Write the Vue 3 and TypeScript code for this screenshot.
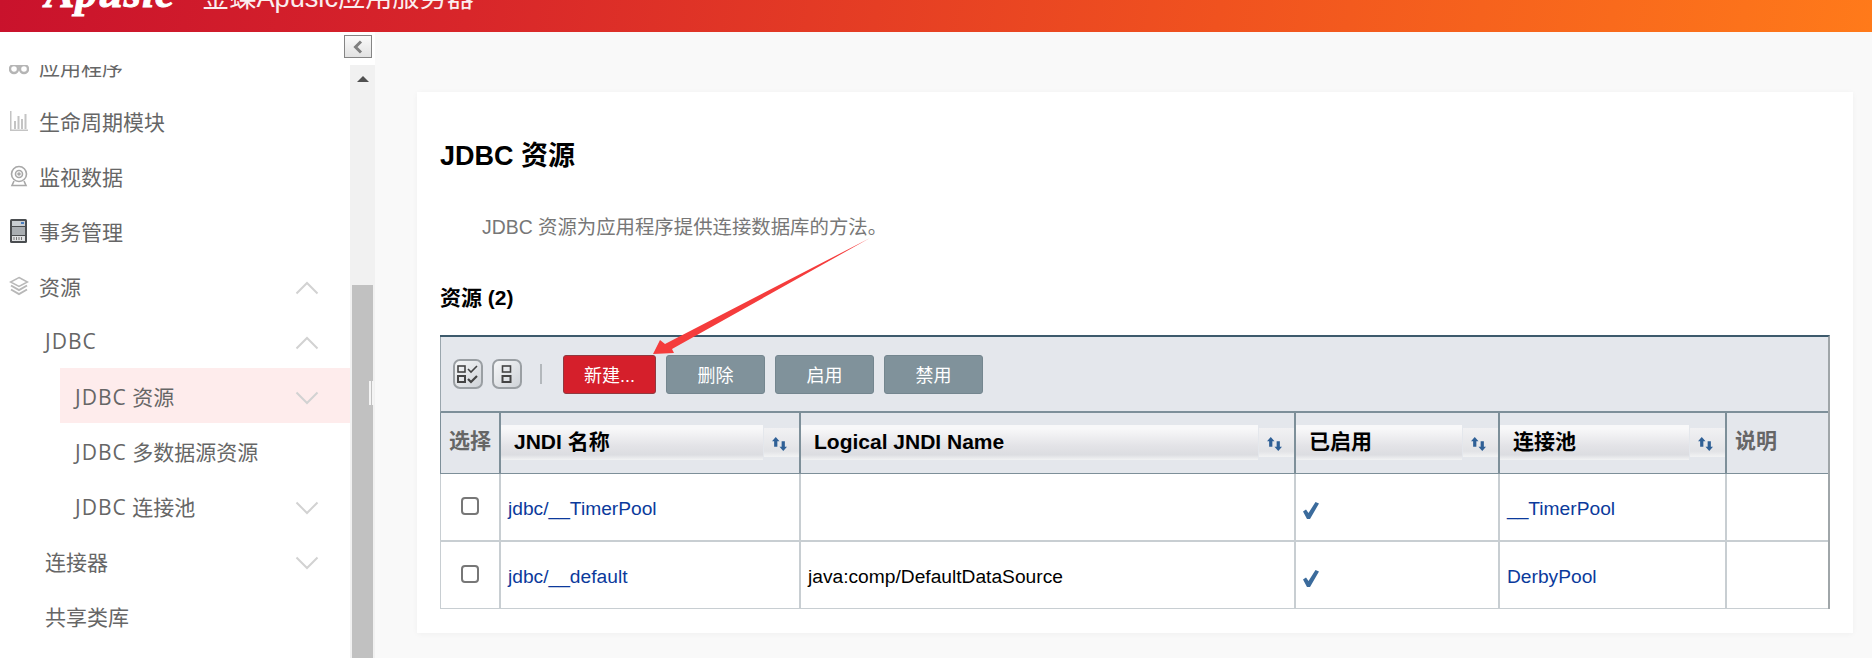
<script setup lang="ts">
// JDBC resources page of the Apusic admin console
interface MenuItem {
  label: string
  prefix?: string
  level: 1 | 2 | 3
  icon?: string
  chevron?: 'up' | 'down'
  active?: boolean
}

const menu: MenuItem[] = [
  { label: '应用程序', level: 1, icon: 'glasses' },
  { label: '生命周期模块', level: 1, icon: 'bars' },
  { label: '监视数据', level: 1, icon: 'cam' },
  { label: '事务管理', level: 1, icon: 'server' },
  { label: '资源', level: 1, icon: 'layers', chevron: 'up' },
  { prefix: 'JDBC', label: '', level: 2, chevron: 'up' },
  { prefix: 'JDBC', label: ' 资源', level: 3, chevron: 'down', active: true },
  { prefix: 'JDBC', label: ' 多数据源资源', level: 3 },
  { prefix: 'JDBC', label: ' 连接池', level: 3, chevron: 'down' },
  { label: '连接器', level: 2, chevron: 'down' },
  { label: '共享类库', level: 2 },
]

const actions = ['删除', '启用', '禁用']
const sortable = ['JNDI 名称', 'Logical JNDI Name', '已启用', '连接池']

const rows = [
  { name: 'jdbc/__TimerPool', logical: '', pool: '__TimerPool' },
  { name: 'jdbc/__default', logical: 'java:comp/DefaultDataSource', pool: 'DerbyPool' },
]
</script>

<template>
  <div class="page">
    <header class="topbar">
      <span class="logo">Apusic</span>
      <span class="product">金蝶Apusic应用服务器</span>
    </header>

    <div class="body">
      <aside class="side">
        <div class="side-top">
          <button class="collapse">
            <svg width="12" height="14" viewBox="0 0 12 14"><path d="M9 1.500 3.500 7 9 12.500" fill="none" stroke="#808080" stroke-width="3" /></svg>
          </button>
        </div>
        <div class="side-main">
          <nav class="menu">
            <ul>
              <li v-for="item in menu" :key="(item.prefix ?? '') + item.label" class="item" :class="['lv' + item.level, { active: item.active }]">
                <span class="row">
                  <span v-if="item.icon" class="icon">
                    <svg v-if="item.icon === 'glasses'" width="20" height="20" viewBox="0 0 20 20" fill="none" stroke="#b5b5b5" stroke-width="2.400"><circle cx="5" cy="13" r="4" /><circle cx="15" cy="13" r="4" /><path d="M4 8 6 4M16 8l-2-4M8 10h4" /></svg>
                    <svg v-else-if="item.icon === 'bars'" width="20" height="20" viewBox="0 0 20 20" fill="#c4c4c4"><path d="M1 0h1.500v18.500H19V20H1z" /><rect x="5" y="10" width="2" height="8" /><rect x="8.500" y="5" width="2" height="13" /><rect x="12" y="8" width="2" height="10" /><rect x="15.500" y="3" width="2" height="15" /></svg>
                    <svg v-else-if="item.icon === 'cam'" width="20" height="22" viewBox="0 0 20 22" fill="none" stroke="#a8a8a8" stroke-width="1.600"><circle cx="10" cy="9" r="7.500" /><circle cx="10" cy="9" r="3.500" /><circle cx="10" cy="9" r="1" fill="#a8a8a8" /><path d="M5 16 3 20.500h14L15 16" /></svg>
                    <svg v-else-if="item.icon === 'server'" width="20" height="24" viewBox="0 0 20 24"><rect x="1" y="0" width="17" height="24" rx="1.500" fill="#4a4d50" /><rect x="3" y="2" width="13" height="5" fill="#c9ced2" /><rect x="3" y="8" width="13" height="8" fill="#a9aeb2" /><rect x="3" y="17" width="13" height="5" fill="#e0e2e4" /><path d="M5 18v3M7.500 18v3M10 18v3M12.500 18v3" stroke="#777" /><rect x="12" y="3" width="3" height="2" fill="#4c7fc0" /></svg>
                    <svg v-else width="20" height="20" viewBox="0 0 20 20" fill="none" stroke="#b8b8b8" stroke-width="1.500"><path d="M10 1.500 18.500 6 10 10.500 1.500 6z" /><path d="M2 9.500 10 14l8-4.500" stroke-width="2" /><path d="M2 13.500 10 18l8-4.500" stroke-width="2" /></svg>
                  </span>
                  <span class="label"><span v-if="item.prefix" class="latin">{{ item.prefix }}</span>{{ item.label }}</span>
                </span>
                <svg v-if="item.chevron" class="chevron" width="24" height="14" viewBox="0 0 24 14">
                  <path :d="item.chevron === 'up' ? 'M1.500 12.500 12 2l10.500 10.500' : 'M1.500 1.500 12 12 22.500 1.500'" fill="none" stroke="#d2d2d2" stroke-width="2" />
                </svg>
              </li>
            </ul>
          </nav>
          <div class="scrollbar">
            <div class="track-top"><i class="arrow"></i></div>
            <div class="thumb"></div>
            <div class="grip"></div>
          </div>
        </div>
      </aside>

      <main class="main">
        <section class="card">
          <h1>JDBC 资源</h1>
          <p class="desc">JDBC 资源为应用程序提供连接数据库的方法。</p>
          <h2>资源 (2)</h2>

          <div class="grid">
            <div class="toolbar">
              <button class="tool">
                <svg width="22" height="20" viewBox="0 0 22 20" fill="none" stroke="#444" stroke-width="1.600"><rect x="1" y="2" width="7" height="6" /><rect x="1" y="12" width="7" height="6" stroke-width="2" /><path d="m11 5 3 3 6-6" /><path d="m11 15 3 3 6-6" stroke-width="2.200" /></svg>
              </button>
              <button class="tool">
                <svg width="12" height="20" viewBox="0 0 12 20" fill="none" stroke="#444" stroke-width="1.600"><rect x="1.500" y="2" width="8" height="6" /><rect x="1.500" y="12" width="8" height="6" stroke-width="2" /></svg>
              </button>
              <span class="sep"></span>
              <button class="btn primary">新建...</button>
              <button v-for="a in actions" :key="a" class="btn">{{ a }}</button>
            </div>

            <table>
              <colgroup>
                <col class="c-select" />
                <col class="c-name" />
                <col class="c-logical" />
                <col class="c-enabled" />
                <col class="c-pool" />
                <col />
              </colgroup>
              <thead>
                <tr>
                  <th class="plain">选择</th>
                  <th v-for="h in sortable" :key="h">
                    <div class="head">
                      <span class="head-title">{{ h }}</span>
                      <span class="head-sort">
                        <svg width="15" height="14" viewBox="0 0 14 13" fill="#2f6096"><path d="M3.500 0 7 4H5v5H2V4H0z" /><path d="M10.500 13 14 9h-2V4H9v5H7z" /></svg>
                      </span>
                    </div>
                  </th>
                  <th class="plain">说明</th>
                </tr>
              </thead>
              <tbody>
                <tr v-for="r in rows" :key="r.name">
                  <td class="center"><input type="checkbox" class="check" /></td>
                  <td><a>{{ r.name }}</a></td>
                  <td>{{ r.logical }}</td>
                  <td>
                    <svg class="tick" width="16" height="17" viewBox="0 0 16 17"><path d="M0 9.500 3 7.500 5.500 11 12.500 0 16 1.500 7 17H4z" fill="#3b6b9c" /></svg>
                  </td>
                  <td><a>{{ r.pool }}</a></td>
                  <td></td>
                </tr>
              </tbody>
            </table>
          </div>
        </section>
      </main>
    </div>

    <!-- red annotation arrow drawn over the screenshot -->
    <svg class="annotation" width="1872" height="658" viewBox="0 0 1872 658">
      <path d="M653 354 660 340 665 344 870 238 672 349 674 353z" fill="#f53c3c" />
    </svg>
  </div>
</template>

<style scoped>
.page {
  position: relative;
  width: 1872px;
  height: 658px;
  overflow: hidden;
  display: flex;
  flex-direction: column;
  font-family: "Liberation Sans", "Noto Sans CJK SC", sans-serif;
}

.topbar {
  height: 32px;
  flex: none;
  display: flex;
  align-items: flex-end;
  padding: 0 0 21px 45px;
  box-sizing: border-box;
  overflow: hidden;
  background: linear-gradient(100deg, #c9122c 0%, #d8262a 25%, #f0521f 65%, #ff7a1a 100%);
  color: #fff;
}
.logo {
  font-family: "Liberation Serif", serif;
  font-style: italic;
  font-weight: 700;
  font-size: 44px;
  line-height: 40px;
  width: 157px;
  flex: none;
  letter-spacing: 1px;
  -webkit-text-stroke: 1px #fff;
  transform: translateY(2px);
}
.product {
  font-size: 27.200px;
  line-height: 30px;
  white-space: nowrap;
  opacity: 0.92;
  transform: translateY(2px);
}

.body {
  flex: 1;
  min-height: 0;
  display: flex;
}

.side {
  width: 375px;
  flex: none;
  display: flex;
  flex-direction: column;
  background: #fff;
}
.side-top {
  height: 33px;
  flex: none;
  display: flex;
  justify-content: flex-end;
  align-items: flex-start;
  padding: 3px 3px 0 0;
  box-sizing: border-box;
}
.collapse {
  width: 28px;
  height: 23px;
  padding: 0;
  display: flex;
  align-items: center;
  justify-content: center;
  border: 1px solid #858585;
  background: linear-gradient(#fafafa, #e2e2e2);
}
.side-main {
  flex: 1;
  min-height: 0;
  display: flex;
}
.menu {
  flex: 1;
  min-width: 0;
  overflow: hidden;
}
.menu ul {
  list-style: none;
  padding: 0;
  margin: -27px 0 0;
}
.item {
  height: 55px;
  display: flex;
  align-items: center;
  justify-content: space-between;
  padding-right: 31px;
  font-family: "Open Sans", "Noto Sans CJK SC", sans-serif;
  font-size: 21px;
  color: #666;
}
.row {
  display: flex;
  align-items: center;
}
.icon {
  width: 30px;
  padding-left: 9px;
  display: flex;
  align-items: center;
  flex: none;
}
.label {
  white-space: pre;
}
.latin {
  letter-spacing: 1px;
}
.chevron {
  margin-top: 5px;
}
.lv2 {
  padding-left: 45px;
}
.lv3 {
  margin-left: 60px;
  padding-left: 15px;
}
.active {
  background: #feecec;
}

.scrollbar {
  position: relative;
  width: 25px;
  flex: none;
  display: flex;
  flex-direction: column;
  align-items: center;
  background: #f1f1f1;
}
.track-top {
  height: 220px;
  flex: none;
  padding-top: 11px;
  box-sizing: border-box;
}
.arrow {
  display: block;
  width: 0;
  height: 0;
  border-left: 6px solid transparent;
  border-right: 6px solid transparent;
  border-bottom: 6px solid #505050;
}
.thumb {
  width: 21px;
  flex: 1;
  background: #c1c1c1;
}
.grip {
  position: absolute;
  left: 19px;
  top: 316px;
  width: 1px;
  height: 24px;
  border-left: 2px solid #f4f4f4;
  border-right: 2px solid #f4f4f4;
}

.main {
  flex: 1;
  min-width: 0;
  padding: 60px 19px 0 42px;
  background: #f9f9f9;
}
.card {
  height: 541px;
  box-sizing: border-box;
  padding: 48px 23px 0;
  background: #fff;
  box-shadow: 0 1px 6px rgba(0, 0, 0, 0.04);
}
h1 {
  margin: 0;
  font-size: 27px;
  line-height: 32px;
  color: #000;
}
.desc {
  margin: 43px 0 0 42px;
  font-size: 19.400px;
  line-height: 24px;
  color: #777;
}
h2 {
  margin: 47px 0 0;
  font-size: 21px;
  line-height: 24px;
  color: #000;
}

.grid {
  margin-top: 25px;
  border-top: 2px solid #3d5a6c;
  border-right: 2px solid #a0a6a9;
}
.toolbar {
  height: 76px;
  box-sizing: border-box;
  display: flex;
  align-items: center;
  padding: 0 0 0 12px;
  background: #e4e7ec;
  border-left: 1px solid #9aa6ad;
  border-bottom: 2px solid #7d8f99;
}
.tool {
  width: 30px;
  height: 30px;
  padding: 0;
  margin-right: 9px;
  display: flex;
  align-items: center;
  justify-content: center;
  border: 2px solid #9a9fa3;
  border-radius: 7px;
  background: linear-gradient(135deg, #f6f7f8, #cfd3d8);
}
.sep {
  width: 2px;
  height: 20px;
  margin: 0 21px 0 9px;
  background: #b3b8bc;
}
.btn {
  width: 99px;
  height: 39px;
  margin-right: 10px;
  padding: 0;
  border: 1px solid #74868f;
  border-radius: 3px;
  background: #80929b;
  color: #fff;
  font-family: "Liberation Sans", "Noto Sans CJK SC", sans-serif;
  font-size: 18px;
}
.btn.primary {
  width: 93px;
  background: #d51f2b;
  border-color: #8f3a40;
}

table {
  width: 100%;
  table-layout: fixed;
  border-collapse: separate;
  border-spacing: 0;
}
.c-select { width: 59px; }
.c-name { width: 300px; }
.c-logical { width: 495px; }
.c-enabled { width: 204px; }
.c-pool { width: 227px; }

th {
  height: 61px;
  padding: 0;
  box-sizing: border-box;
  background: #e4e7ec;
  border-left: 2px solid #7d8f99;
  border-bottom: 1px solid #7d8f99;
  text-align: left;
  font-size: 21px;
  color: #000;
}
th:first-child {
  border-left-width: 1px;
}
th.plain {
  padding-left: 8px;
  color: #666;
  padding-bottom: 8px;
}
.head {
  display: flex;
  align-items: center;
  margin-bottom: 2px;
}
.head-title {
  flex: 1;
  height: 35px;
  line-height: 33px;
  padding-left: 13px;
  margin-right: 1px;
  white-space: nowrap;
  background: linear-gradient(#f8f8f9 10%, #e3e3e7 60%, #dcdde1 85%, #f2f3f4 100%);
}
.head-sort {
  width: 35px;
  height: 29px;
  flex: none;
  display: flex;
  align-items: center;
  justify-content: center;
  padding: 3px 4px 0 0;
  box-sizing: border-box;
  background: linear-gradient(#f1f1f3, #e2e3e6 80%, #f2f3f4);
}

td {
  height: 67.500px;
  padding: 4px 0 0 7px;
  box-sizing: border-box;
  background: #fff;
  border-left: 2px solid #c8ced2;
  border-bottom: 2px solid #c8ced2;
  font-size: 19.200px;
  color: #000;
  white-space: nowrap;
}
td:first-child {
  border-left-width: 1px;
}
td.center {
  padding: 0 0 3px;
  text-align: center;
}
tbody tr:last-child td {
  border-bottom-width: 1px;
}
a {
  color: #0b3a9c;
}
.check {
  appearance: none;
  display: inline-block;
  width: 18px;
  height: 18px;
  margin: 0;
  vertical-align: middle;
  border: 2px solid #777;
  border-radius: 4px;
  background: #fff;
}
.tick {
  display: block;
  margin-top: 4px;
}

.annotation {
  position: absolute;
  left: 0;
  top: 0;
  pointer-events: none;
}
</style>
